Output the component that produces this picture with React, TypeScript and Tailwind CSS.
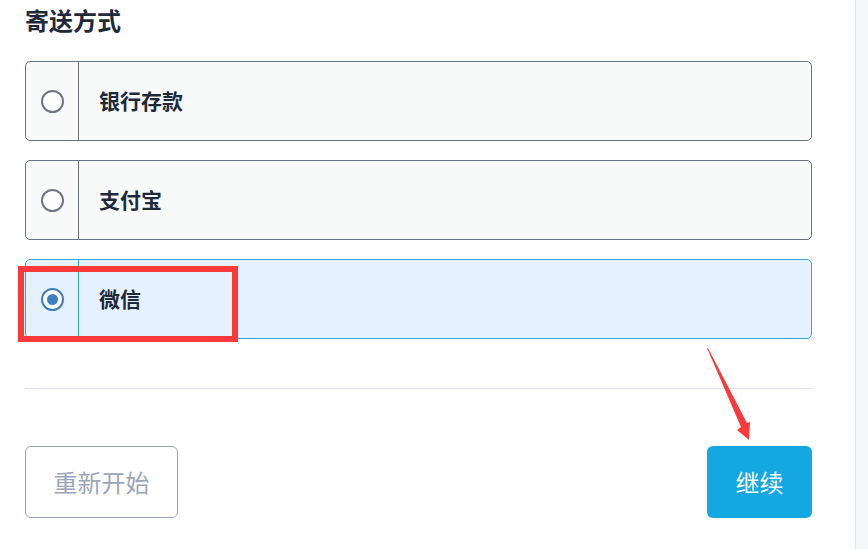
import { useState } from 'react';

const options = ['银行存款', '支付宝', '微信'];

export default function App() {
  const [selected, setSelected] = useState(2);

  return (
    <div
      className="flex h-[549px] w-[868px] overflow-hidden bg-white"
      style={{ fontFamily: '"Noto Sans CJK SC", "Noto Sans", sans-serif' }}
    >
      <div className="relative w-[855px] shrink-0 pl-[25px] pr-[43px]">
        <h2 className="mt-[1px] h-[38px] text-[24px] font-bold leading-[38px] text-[#1e293b]">寄送方式</h2>

        <div className="mt-[22px] flex flex-col gap-[19px]">
          {options.map((label, i) => {
            const active = selected === i;
            return (
              <button
                key={label}
                onClick={() => setSelected(i)}
                className={`flex h-[80px] w-full items-stretch rounded-[5px] border text-left ${
                  active ? 'border-[#2ea8de] bg-[#e5f1fc]' : 'border-[#667487] bg-[#f8fafa]'
                }`}
              >
                <div
                  className={`flex w-[53px] shrink-0 items-center justify-center border-r ${
                    active ? 'border-[#2ea8de]' : 'border-[#667487]'
                  }`}
                >
                  <span
                    className={`flex h-[23px] w-[23px] items-center justify-center rounded-full border-2 ${
                      active ? 'border-[#3f7fc0]' : 'border-[#6b7787]'
                    } bg-white`}
                  >
                    {active && <span className="h-[11px] w-[11px] rounded-full bg-[#3f7fc0]" />}
                  </span>
                </div>
                <div className="flex items-center pl-[20px] text-[21px] font-bold text-[#1e293b]">{label}</div>
              </button>
            );
          })}
        </div>

        <div className="mt-[49px] h-px w-full bg-[#e1e4ef]" />

        <div className="mt-[57px] flex items-center justify-between">
          <button className="h-[72px] w-[153px] rounded-[6px] border border-[#9aa6b8] text-[24px] text-[#9aa6b8]">
            重新开始
          </button>
          <button className="h-[72px] w-[105px] rounded-[6px] bg-[#14a7e1] text-[24px] text-white">继续</button>
        </div>

        {/* annotation: highlight box */}
        <div className="pointer-events-none absolute left-[18px] top-[266px] h-[76px] w-[220px] border-[6px] border-[#fa3a3a]" />

        {/* annotation: arrow */}
        <svg className="pointer-events-none absolute left-[700px] top-[344px]" width="60" height="100" viewBox="0 0 60 100">
          <polygon points="7,4 8,4 47,79 50,78 49,96 37,86 41,83" fill="#fa3a3a" />
        </svg>
      </div>
      <div className="flex-1 border-l border-[#dde3ee] bg-[#f5f8fa]" />
    </div>
  );
}
